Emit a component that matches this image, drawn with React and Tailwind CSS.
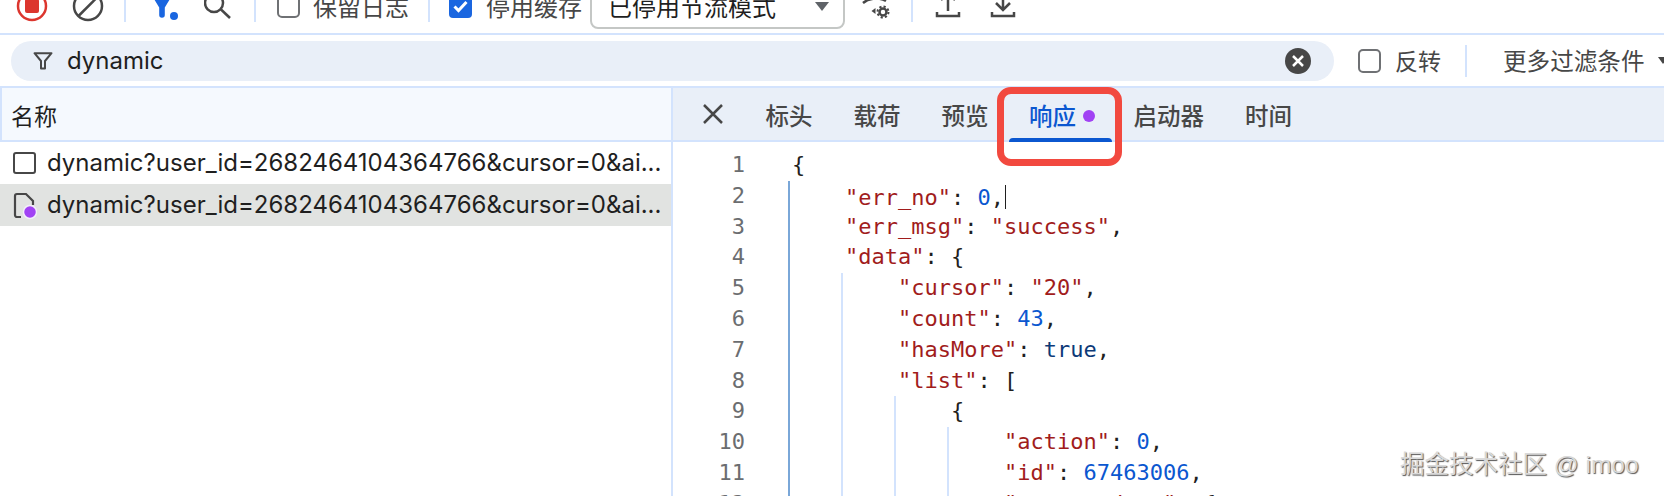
const uiFont = "font-['Inter','Noto_Sans_CJK_SC',sans-serif]";
const cjkFont = "font-['Noto_Sans_CJK_SC',sans-serif]";

const lines = [
  { depth: 0, parts: [['{', 'p']] },
  { depth: 1, parts: [['"err_no"', 's'], [': ', 'p'], ['0', 'n'], [',', 'p']], caret: true },
  { depth: 1, parts: [['"err_msg"', 's'], [': ', 'p'], ['"success"', 's'], [',', 'p']] },
  { depth: 1, parts: [['"data"', 's'], [': {', 'p']] },
  { depth: 2, parts: [['"cursor"', 's'], [': ', 'p'], ['"20"', 's'], [',', 'p']] },
  { depth: 2, parts: [['"count"', 's'], [': ', 'p'], ['43', 'n'], [',', 'p']] },
  { depth: 2, parts: [['"hasMore"', 's'], [': ', 'p'], ['true', 'b'], [',', 'p']] },
  { depth: 2, parts: [['"list"', 's'], [': [', 'p']] },
  { depth: 3, parts: [['{', 'p']] },
  { depth: 4, parts: [['"action"', 's'], [': ', 'p'], ['0', 'n'], [',', 'p']] },
  { depth: 4, parts: [['"id"', 's'], [': ', 'p'], ['67463006', 'n'], [',', 'p']] },
  { depth: 4, parts: [['"target_data"', 's'], [': {', 'p']] },
];

const tokenColors = {
  s: 'text-[#a11c1c]',
  p: 'text-[#1f1f1f]',
  n: 'text-[#0b57d0]',
  b: 'text-[#0d3a78]',
};

function Sep({ className }) {
  return <div className={`h-[32px] w-[2px] shrink-0 bg-[#d3e3fd] ${className}`} />;
}

function Checkbox({ checked, className }) {
  if (checked) {
    return (
      <div className={`flex h-[23px] w-[23px] shrink-0 items-center justify-center rounded-[4px] bg-[#1a66e0] ${className}`}>
        <svg width="19" height="19" viewBox="0 0 19 19" fill="none">
          <path d="M3.5 9.5l4 4 8-8.5" stroke="#fff" strokeWidth="3" />
        </svg>
      </div>
    );
  }
  return <div className={`h-[24px] w-[23px] shrink-0 rounded-[5px] border-2 border-[#6f7174] ${className}`} />;
}

function Toolbar() {
  return (
    <div className="h-[35px] shrink-0 overflow-hidden border-b-2 border-[#d3e3fd] bg-white">
      <div className="-mt-[19px] flex h-[50px] items-center pl-[16px] text-[24px] text-[#474747]">
        <svg className="shrink-0" width="32" height="32" viewBox="0 0 32 32" fill="none">
          <circle cx="16" cy="16" r="14" stroke="#dc362e" strokeWidth="2.5" />
          <rect x="9" y="9" width="14" height="14" rx="2" fill="#dc362e" />
        </svg>
        <svg className="ml-[24px] shrink-0" width="32" height="32" viewBox="0 0 32 32" fill="none">
          <circle cx="16" cy="16" r="14" stroke="#474747" strokeWidth="2.5" />
          <path d="M6.5 26L26 6.5" stroke="#474747" strokeWidth="2.5" />
        </svg>
        <Sep className="ml-[20px]" />
        <svg className="ml-[22px] shrink-0" width="32" height="28" viewBox="0 0 32 28" fill="none">
          <path d="M3 2h22l-8.2 13.5V23a2.8 2.8 0 0 1-5.6 0v-7.500z" fill="#1a66e0" />
          <circle cx="26" cy="24" r="4" fill="#1a66e0" />
        </svg>
        <svg className="ml-[24px] shrink-0" width="30" height="30" viewBox="0 0 30 30" fill="none">
          <circle cx="10" cy="12" r="9" stroke="#474747" strokeWidth="2.5" />
          <path d="M17 18.5l9 8.5" stroke="#474747" strokeWidth="2.5" />
        </svg>
        <Sep className="ml-[20px]" />
        <Checkbox className="ml-[21px]" />
        <span className={`ml-[13px] w-[96px] shrink-0 ${cjkFont}`}>保留日志</span>
        <Sep className="ml-[19px]" />
        <Checkbox checked className="ml-[19px]" />
        <span className={`ml-[14px] w-[96px] shrink-0 ${cjkFont}`}>停用缓存</span>
        <div className="ml-[8px] flex h-[46px] w-[255px] shrink-0 items-center rounded-[8px] border-2 border-[#c4c7c5] pl-[16px] pr-[14px]">
          <span className={`${cjkFont} text-[#1f1f1f]`}>已停用节流模式</span>
          <svg className="ml-auto" width="14" height="9" viewBox="0 0 14 9">
            <path d="M0 0h14L7 9z" fill="#5f6368" />
          </svg>
        </div>
        <svg className="ml-[16px] shrink-0" width="32" height="32" viewBox="0 0 32 32" fill="none">
          <path d="M2 13C8 8 18 7 25 11" stroke="#474747" strokeWidth="2.5" />
          <path d="M10.5 21l4-3v6z" fill="#474747" />
          <circle cx="22" cy="22" r="3.5" stroke="#474747" strokeWidth="2.5" />
          <circle cx="22" cy="22" r="5.5" stroke="#474747" strokeWidth="2" strokeDasharray="2.2 2.1" />
        </svg>
        <Sep className="ml-[18px]" />
        <svg className="ml-[20px] shrink-0" width="30" height="30" viewBox="0 0 30 30" fill="none">
          <path d="M15 20V2M8 9l7-7 7 7" stroke="#474747" strokeWidth="2.5" />
          <path d="M4 21v4h22v-4" stroke="#474747" strokeWidth="2.5" />
        </svg>
        <svg className="ml-[25px] shrink-0" width="30" height="30" viewBox="0 0 30 30" fill="none">
          <path d="M15 2v17M8 12l7 7 7-7" stroke="#474747" strokeWidth="2.5" />
          <path d="M4 21v4h22v-4" stroke="#474747" strokeWidth="2.5" />
        </svg>
      </div>
    </div>
  );
}

function FilterBar() {
  return (
    <div className="flex h-[53px] shrink-0 items-center border-b-2 border-[#d3e3fd] bg-white pl-[11px]">
      <div className="flex h-[40px] w-[1323px] shrink-0 items-center rounded-full bg-[#e9eff8] pl-[22px] pr-[23px]">
        <svg width="20" height="18" viewBox="0 0 20 18" fill="none">
          <path d="M1.5 1.2h17L12 9v7.5H8V9z" stroke="#474747" strokeWidth="2" strokeLinejoin="round" />
        </svg>
        <span className={`ml-[14px] text-[24px] text-[#1f1f1f] ${uiFont}`}>dynamic</span>
        <div className="ml-auto flex h-[26px] w-[26px] items-center justify-center rounded-full bg-[#474747]">
          <svg width="14" height="14" viewBox="0 0 14 14" fill="none">
            <path d="M2 2l10 10M12 2L2 12" stroke="#fff" strokeWidth="2.5" />
          </svg>
        </div>
      </div>
      <Checkbox className="ml-[24px]" />
      <span className={`ml-[14px] shrink-0 whitespace-nowrap ${cjkFont} text-[23px] text-[#474747]`}>反转</span>
      <Sep className="ml-[24px]" />
      <span className={`ml-[36px] shrink-0 whitespace-nowrap ${cjkFont} text-[23.6px] text-[#474747]`}>更多过滤条件</span>
      <svg className="ml-[13px] shrink-0" width="10" height="7" viewBox="0 0 10 7">
        <path d="M0 0h10L5 7z" fill="#474747" />
      </svg>
    </div>
  );
}

function RequestList() {
  const url = 'dynamic?user_id=2682464104364766&cursor=0&ai...';
  return (
    <div className="flex w-[673px] shrink-0 flex-col border-r-2 border-[#d3e3fd]">
      <div className={`flex h-[54px] shrink-0 items-center border-b-2 border-l-2 border-[#d3e3fd] bg-[#f5f9fe] pl-[9px] pt-[3px] ${cjkFont} text-[23px] text-[#1f1f1f]`}>
        名称
      </div>
      <div className="flex h-[42px] items-center pl-[13px]">
        <div className="h-[22px] w-[23px] rounded-[3px] border-2 border-[#474747]" />
        <span className={`ml-[11px] whitespace-nowrap text-[24px] text-[#1f1f1f] ${uiFont}`}>{url}</span>
      </div>
      <div className="flex h-[42px] items-center bg-[#e1e3e1] pl-[13px]">
        <svg className="shrink-0" width="24" height="30" viewBox="0 0 24 30" fill="none">
          <path d="M8 27H4a2 2 0 0 1-2-2V6a2 2 0 0 1 2-2h9l7 7v4" stroke="#474747" strokeWidth="2.2" />
          <circle cx="17" cy="22" r="6.5" fill="#a142f4" stroke="#f3eefa" strokeWidth="1.5" />
        </svg>
        <span className={`ml-[10px] whitespace-nowrap text-[24px] text-[#1f1f1f] ${uiFont}`}>{url}</span>
      </div>
    </div>
  );
}

function DetailTabs() {
  const tabClass = `flex h-full items-center px-[20.5px] pt-[4px] ${cjkFont} text-[23.5px] font-medium text-[#474747]`;
  return (
    <div className="flex h-[54px] shrink-0 items-stretch border-b-2 border-[#d3e3fd] bg-[#e9eff8]">
      <div className="flex w-[72px] items-center justify-center pl-[7px]">
        <svg width="22" height="22" viewBox="0 0 22 22" fill="none">
          <path d="M2 2l18 18M20 2L2 20" stroke="#474747" strokeWidth="2.5" />
        </svg>
      </div>
      <div className={tabClass}>标头</div>
      <div className={tabClass}>载荷</div>
      <div className={tabClass}>预览</div>
      <div className={`relative flex w-[104px] items-center pl-[20px] pt-[4px] ${cjkFont} text-[23.5px] font-medium text-[#0b57d0]`}>
        响应
        <span className="ml-[7px] h-[12px] w-[12px] rounded-full bg-[#a142f4]" />
        <span className="absolute -bottom-[2px] left-0 h-[4px] w-[103px] rounded-t-[4px] bg-[#0b57d0]" />
      </div>
      <div className={tabClass}>启动器</div>
      <div className={tabClass}>时间</div>
    </div>
  );
}

function CodeLine({ number, line }) {
  return (
    <div className="flex h-[30.8px] items-stretch font-['DejaVu_Sans_Mono',monospace] text-[22px] leading-[30.8px]">
      <span className="w-[72px] shrink-0 text-right text-[#6b6d70]">{number}</span>
      <span className="w-[43px] shrink-0" />
      {Array.from({ length: line.depth }).map((_, i) => (
        <span
          key={i}
          className={i === 0 ? 'w-[53px] shrink-0 border-l-2 border-[#7aa7d8]' : 'w-[53px] shrink-0 border-l-2 border-[#d3e3fd]'}
        />
      ))}
      <span className="ml-[4px] whitespace-pre">
        {line.parts.map(([text, kind], i) => (
          <span key={i} className={tokenColors[kind]}>{text}</span>
        ))}
        {line.caret && <span className="ml-[1px] inline-block h-[24px] w-[1.5px] translate-y-[4px] bg-[#1f1f1f]" />}
      </span>
    </div>
  );
}

export default function App() {
  return (
    <div className="relative flex h-[496px] w-[1664px] flex-col overflow-hidden bg-white">
      <Toolbar />
      <FilterBar />
      <div className="flex min-h-0 flex-1">
        <RequestList />
        <div className="flex min-w-0 flex-1 flex-col">
          <DetailTabs />
          <div className="mt-[8px] overflow-hidden">
            {lines.map((line, i) => (
              <CodeLine key={i} number={i + 1} line={line} />
            ))}
          </div>
        </div>
      </div>

      {/* 红框标注 */}
      <div className="absolute left-[997px] top-[87px] h-[79px] w-[125px] rounded-[14px] border-[7px] border-[#f2493f]" />

      {/* 水印 */}
      <div className="absolute left-[1400px] top-[450px] whitespace-nowrap font-['Liberation_Sans','Noto_Sans_CJK_SC',sans-serif] text-[24.5px] leading-[30px] text-[#d9d9d9] [text-shadow:1px_1px_1px_#555]">
        掘金技术社区 @ imoo
      </div>
    </div>
  );
}
